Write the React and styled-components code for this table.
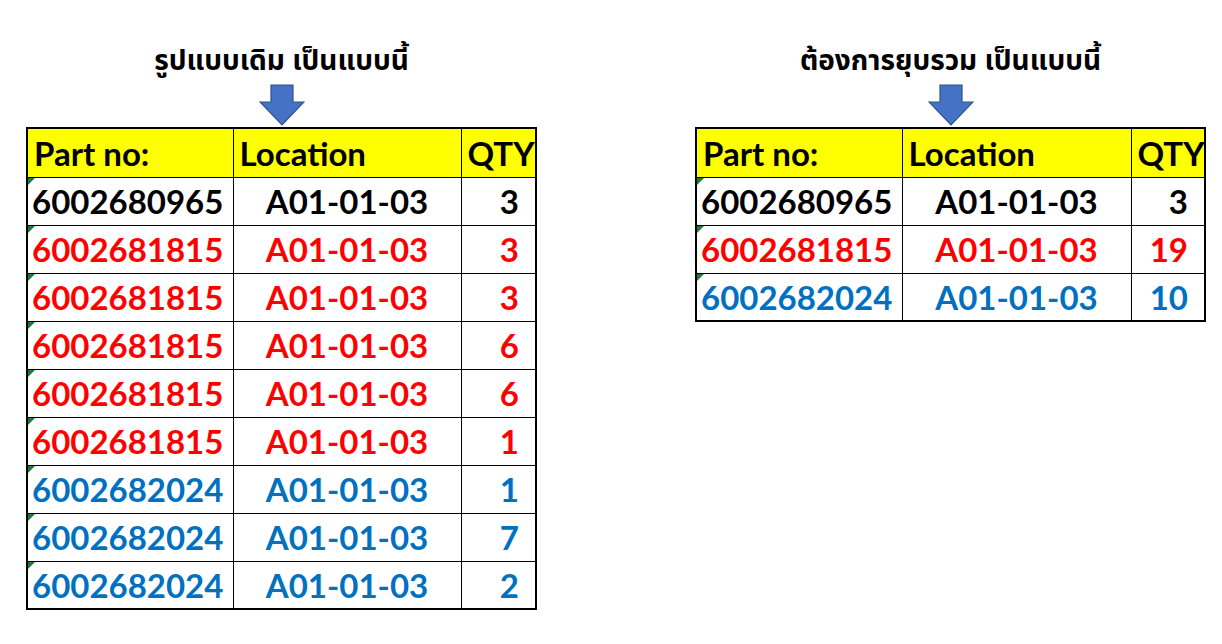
import React from 'react';
import styled, { createGlobalStyle } from 'styled-components';

const GlobalStyle = createGlobalStyle`
  html, body {
    margin: 0;
    padding: 0;
    background: #ffffff;
  }
`;

const Page = styled.div`
  width: 1222px;
  height: 644px;
  display: flex;
  align-items: flex-start;
  gap: 160px;
  padding: 44px 0 0 27px;
  box-sizing: border-box;
  font-family: 'Lato', 'Liberation Sans', sans-serif;
`;

const Block = styled.div`
  display: flex;
  flex-direction: column;
  align-items: center;
  width: 509px;
`;

const Title = styled.h2`
  margin: 0;
  height: 36px;
  line-height: 36px;
  font-family: Tahoma, 'Noto Sans Thai', 'Noto Sans', 'DejaVu Sans', sans-serif;
  font-size: 28px;
  font-weight: 700;
  color: #000;
  white-space: nowrap;
`;

const ArrowBox = styled.div`
  height: 47px;
  display: flex;
  align-items: flex-start;
  justify-content: center;
  padding-top: 4px;
  box-sizing: border-box;
`;

const Table = styled.table`
  border-collapse: collapse;
  border: 2px solid #000;
  table-layout: fixed;
  width: 509px;
`;

const HeadCell = styled.th`
  background: #ffff00;
  border: 1px solid #000;
  height: 49px;
  padding: 0 0 0 6px;
  text-align: left;
  font-size: 33px;
  font-weight: 700;
  color: #000;
  box-sizing: border-box;
`;

const Cell = styled.td`
  position: relative;
  border: 1px solid #000;
  height: 48px;
  padding: 0 ${(p) => (p.$align === 'right' ? '16px' : '0')} 0 ${(p) => (p.$align === 'left' ? '4px' : '0')};
  text-align: ${(p) => p.$align};
  font-size: 33px;
  font-weight: 700;
  color: ${(p) => p.$color};
  box-sizing: border-box;

  ${(p) =>
    p.$flag &&
    `&::before {
      content: '';
      position: absolute;
      left: 0;
      top: 0;
      border-top: 7px solid #1e7a3a;
      border-right: 7px solid transparent;
    }`}
`;

const colors = {
  black: '#000000',
  red: '#ff0000',
  blue: '#0070c0',
};

const before = [
  ['6002680965', 'A01-01-03', '3', 'black'],
  ['6002681815', 'A01-01-03', '3', 'red'],
  ['6002681815', 'A01-01-03', '3', 'red'],
  ['6002681815', 'A01-01-03', '6', 'red'],
  ['6002681815', 'A01-01-03', '6', 'red'],
  ['6002681815', 'A01-01-03', '1', 'red'],
  ['6002682024', 'A01-01-03', '1', 'blue'],
  ['6002682024', 'A01-01-03', '7', 'blue'],
  ['6002682024', 'A01-01-03', '2', 'blue'],
];

const after = [
  ['6002680965', 'A01-01-03', '3', 'black'],
  ['6002681815', 'A01-01-03', '19', 'red'],
  ['6002682024', 'A01-01-03', '10', 'blue'],
];

const DownArrow = () => (
  <svg width="46" height="42" viewBox="0 0 46 42">
    <path
      d="M12 1 H34 V18 H45 L23 41 L1 18 H12 Z"
      fill="#4472c4"
      stroke="#2f528f"
      strokeWidth="1.2"
    />
  </svg>
);

const PartTable = ({ rows, widths }) => (
  <Table>
    <colgroup>
      {widths.map((w, i) => (
        <col key={i} style={{ width: w }} />
      ))}
    </colgroup>
    <thead>
      <tr>
        <HeadCell>Part no:</HeadCell>
        <HeadCell>Location</HeadCell>
        <HeadCell>QTY</HeadCell>
      </tr>
    </thead>
    <tbody>
      {rows.map(([part, loc, qty, c], i) => (
        <tr key={i}>
          <Cell $align="left" $color={colors[c]} $flag>
            {part}
          </Cell>
          <Cell $align="center" $color={colors[c]}>
            {loc}
          </Cell>
          <Cell $align="right" $color={colors[c]}>
            {qty}
          </Cell>
        </tr>
      ))}
    </tbody>
  </Table>
);

const App = () => (
  <>
    <GlobalStyle />
    <Page>
      <Block>
        <Title>รูปแบบเดิม เป็นแบบนี้</Title>
        <ArrowBox>
          <DownArrow />
        </ArrowBox>
        <PartTable rows={before} widths={[206, 228, 75]} />
      </Block>
      <Block>
        <Title>ต้องการยุบรวม เป็นแบบนี้</Title>
        <ArrowBox>
          <DownArrow />
        </ArrowBox>
        <PartTable rows={after} widths={[206, 229, 74]} />
      </Block>
    </Page>
  </>
);

export default App;
